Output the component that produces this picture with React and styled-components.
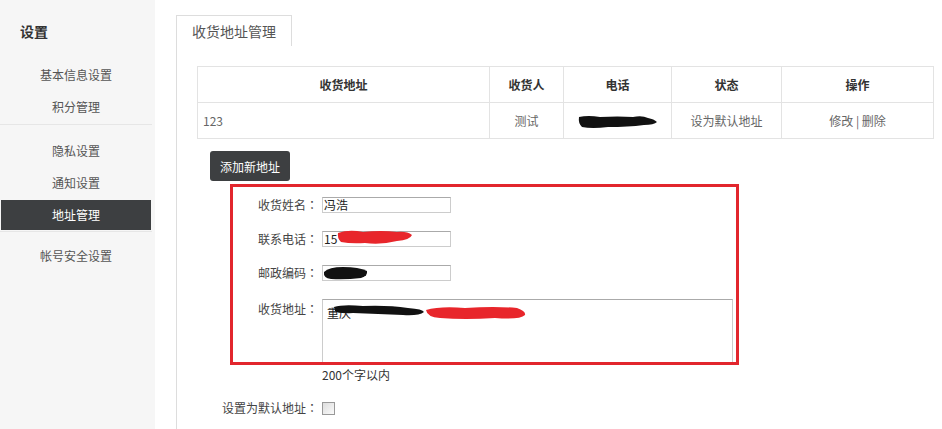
import React from 'react';
import styled, { createGlobalStyle } from 'styled-components';

const GlobalStyle = createGlobalStyle`
    html, body {
        margin: 0;
        padding: 0;
        background: #fff;
    }
    body {
        font-family: "Noto Sans CJK SC", "Liberation Sans", sans-serif;
        font-size: 12px;
        color: #333;
    }
`;

const Page = styled.div`
    position: relative;
    display: flex;
    width: 942px;
    height: 429px;
    overflow: hidden;
`;

const Sidebar = styled.aside`
    width: 155px;
    flex-shrink: 0;
    background: #f6f6f6;
`;

const SideTitle = styled.h2`
    margin: 0;
    padding: 22px 0 0 20px;
    height: 27px;
    font-size: 14px;
    font-weight: bold;
    line-height: 18px;
    color: #333;
`;

const Group = styled.ul`
    list-style: none;
    margin: 0;
    padding: ${p => p.$pad};
    width: 152px;
    border-bottom: ${p => (p.$last ? 'none' : '1px solid #e6e6e6')};
`;

const SideItem = styled.li`
    height: ${p => (p.$active ? '30px' : '32px')};
    margin: ${p => (p.$active ? '1px 0 1px 1px' : '0')};
    width: ${p => (p.$active ? '150px' : '152px')};
    line-height: ${p => (p.$active ? '30px' : '32px')};
    text-align: center;
    font-size: 12px;
    color: ${p => (p.$active ? '#fff' : '#555')};
    background: ${p => (p.$active ? '#3d3f41' : 'transparent')};
`;

const Main = styled.main`
    flex: 1;
    padding: 15px 0 0 21px;
    display: flex;
    flex-direction: column;
`;

const Tab = styled.div`
    width: 114px;
    height: 30px;
    border: 1px solid #ddd;
    border-bottom: none;
    font-size: 14px;
    line-height: 30px;
    text-align: center;
    color: #555;
    background: #fff;
`;

const Panel = styled.section`
    flex: 1;
    border-left: 1px solid #ddd;
    padding: 20px 0 0 20px;
`;

const Table = styled.table`
    width: 731px;
    table-layout: fixed;
    border-collapse: collapse;
    font-size: 12px;
`;

const Th = styled.th`
    height: 35px;
    padding: 0;
    border: 1px solid #e3e3e3;
    font-weight: bold;
    color: #333;
    text-align: center;
    width: ${p => p.$w}px;
`;

const Td = styled.td`
    height: 35px;
    border: 1px solid #e3e3e3;
    color: #666;
    text-align: ${p => (p.$left ? 'left' : 'center')};
    padding: ${p => (p.$left ? '0 5px' : '0')};
`;

const Cover = styled.span`
    position: relative;
    display: inline-block;
    vertical-align: middle;
`;

const Scribble = styled.svg`
    position: absolute;
    left: ${p => p.$x}px;
    top: ${p => p.$y}px;
    pointer-events: none;
`;

const AddButton = styled.button`
    display: block;
    margin: 12px 0 0 13px;
    width: 80px;
    height: 30px;
    border: none;
    border-radius: 3px;
    background: #3d3f41;
    color: #fff;
    font-family: inherit;
    font-size: 12px;
`;

const Form = styled.div`
    display: flex;
    flex-direction: column;
    gap: 18px;
    margin-top: 16px;
`;

const Row = styled.div`
    display: flex;
    align-items: ${p => (p.$top ? 'flex-start' : 'center')};
    min-height: 16px;
    margin-top: ${p => (p.$tight ? '-3px' : '0')};
`;

const Label = styled.label`
    width: 121px;
    flex-shrink: 0;
    text-align: right;
    padding-right: 4px;
    font-size: 12px;
    color: #444;
    line-height: 16px;
    margin-top: ${p => (p.$top ? '2px' : '0')};
`;

const Colon = styled.span`
    font-family: "Noto Sans CJK JP", "Noto Sans CJK SC", sans-serif;
`;

const Field = styled.div`
    position: relative;
    width: 129px;
    height: 16px;
    box-sizing: border-box;
    border: 1px solid #ccc;
    border-top-color: #aaa;
    background: #fff;
    font-size: 12px;
    line-height: 14px;
    padding-left: 1px;
    color: #222;
`;

const Area = styled.div`
    position: relative;
    width: 411px;
    height: 66px;
    box-sizing: border-box;
    border: 1px solid #ccc;
    border-top-color: #aaa;
    padding: 5px 4px;
    font-size: 12px;
    line-height: 16px;
    color: #222;
`;

const Hint = styled.div`
    margin: -18px 0 0 125px;
    line-height: 20px;
    font-size: 12px;
    color: #333;
`;

const Check = styled.span`
    display: inline-block;
    width: 11px;
    height: 11px;
    border: 1px solid #999;
    background: linear-gradient(135deg, #ddd, #fafafa);
`;

const RedFrame = styled.div`
    position: absolute;
    left: 230px;
    top: 184px;
    width: 503px;
    height: 175px;
    border: 3px solid #e2262d;
    pointer-events: none;
`;

function Blob({ x, y, w, h, color, d }) {
    return (
        <Scribble $x={x} $y={y} width={w} height={h} viewBox={`0 0 ${w} ${h}`}>
            <path d={d} fill={color} />
        </Scribble>
    );
}

function FormLabel({ text, top }) {
    return (
        <Label $top={top}>
            {text}
            <Colon>：</Colon>
        </Label>
    );
}

const sideGroups = [
    { pad: '10px 0 1px', items: ['基本信息设置', '积分管理'] },
    { pad: '10px 0 0', items: ['隐私设置', '通知设置', '地址管理'] },
    { pad: '8px 0 0', items: ['帐号安全设置'] },
];

export default function App() {
    return (
        <>
            <GlobalStyle />
            <Page>
                <Sidebar>
                    <SideTitle>设置</SideTitle>
                    {sideGroups.map((g, i) => (
                        <Group key={i} $pad={g.pad} $last={i === sideGroups.length - 1}>
                            {g.items.map(item => (
                                <SideItem key={item} $active={item === '地址管理'}>
                                    {item}
                                </SideItem>
                            ))}
                        </Group>
                    ))}
                </Sidebar>
                <Main>
                    <Tab>收货地址管理</Tab>
                    <Panel>
                        <Table>
                            <thead>
                                <tr>
                                    <Th $w={291}>收货地址</Th>
                                    <Th $w={73}>收货人</Th>
                                    <Th $w={107}>电话</Th>
                                    <Th $w={109}>状态</Th>
                                    <Th $w={151}>操作</Th>
                                </tr>
                            </thead>
                            <tbody>
                                <tr>
                                    <Td $left>123</Td>
                                    <Td>测试</Td>
                                    <Td>
                                        <Cover style={{ width: 80, height: 14 }}>
                                            <Blob x={0} y={0} w={80} h={14} color="#111"
                                                d="M1 2 Q10 0 22 2 Q40 1 55 2 Q64 0 70 3 Q76 4 79 7 Q76 10 66 10 Q50 12 30 12 Q14 14 4 12 Q0 8 1 2 Z" />
                                        </Cover>
                                    </Td>
                                    <Td>设为默认地址</Td>
                                    <Td>修改 | 删除</Td>
                                </tr>
                            </tbody>
                        </Table>
                        <AddButton>添加新地址</AddButton>
                        <Form>
                            <Row>
                                <FormLabel text="收货姓名" />
                                <Field>冯浩</Field>
                            </Row>
                            <Row>
                                <FormLabel text="联系电话" />
                                <Field>
                                    15
                                    <Blob x={14} y={-3} w={76} h={17} color="#e8262b"
                                        d="M1 4 Q12 0 26 3 Q44 1 60 3 Q70 2 75 6 Q73 11 60 12 Q44 16 28 14 Q14 15 4 13 Q0 9 1 4 Z" />
                                </Field>
                            </Row>
                            <Row>
                                <FormLabel text="邮政编码" />
                                <Field>
                                    <Blob x={0} y={0} w={45} h={14} color="#111"
                                        d="M1 6 Q6 1 20 1 Q36 1 44 5 Q45 10 38 12 Q22 14 8 13 Q0 12 1 6 Z" />
                                </Field>
                            </Row>
                            <Row $top>
                                <FormLabel text="收货地址" top />
                                <Area>
                                    重庆
                                    <Blob x={10} y={4} w={92} h={13} color="#111"
                                        d="M1 3 Q10 0 30 2 Q55 1 75 4 Q90 5 91 8 Q86 12 70 11 Q45 10 20 9 Q5 10 2 7 Z" />
                                    <Blob x={102} y={5} w={102} h={16} color="#e8262b"
                                        d="M1 5 Q15 1 40 3 Q70 1 92 3 Q101 6 100 10 Q95 15 70 13 Q40 15 15 13 Q2 12 1 5 Z" />
                                </Area>
                            </Row>
                            <Hint>200个字以内</Hint>
                            <Row $tight>
                                <FormLabel text="设置为默认地址" />
                                <Check />
                            </Row>
                        </Form>
                    </Panel>
                </Main>
                <RedFrame />
            </Page>
        </>
    );
}
